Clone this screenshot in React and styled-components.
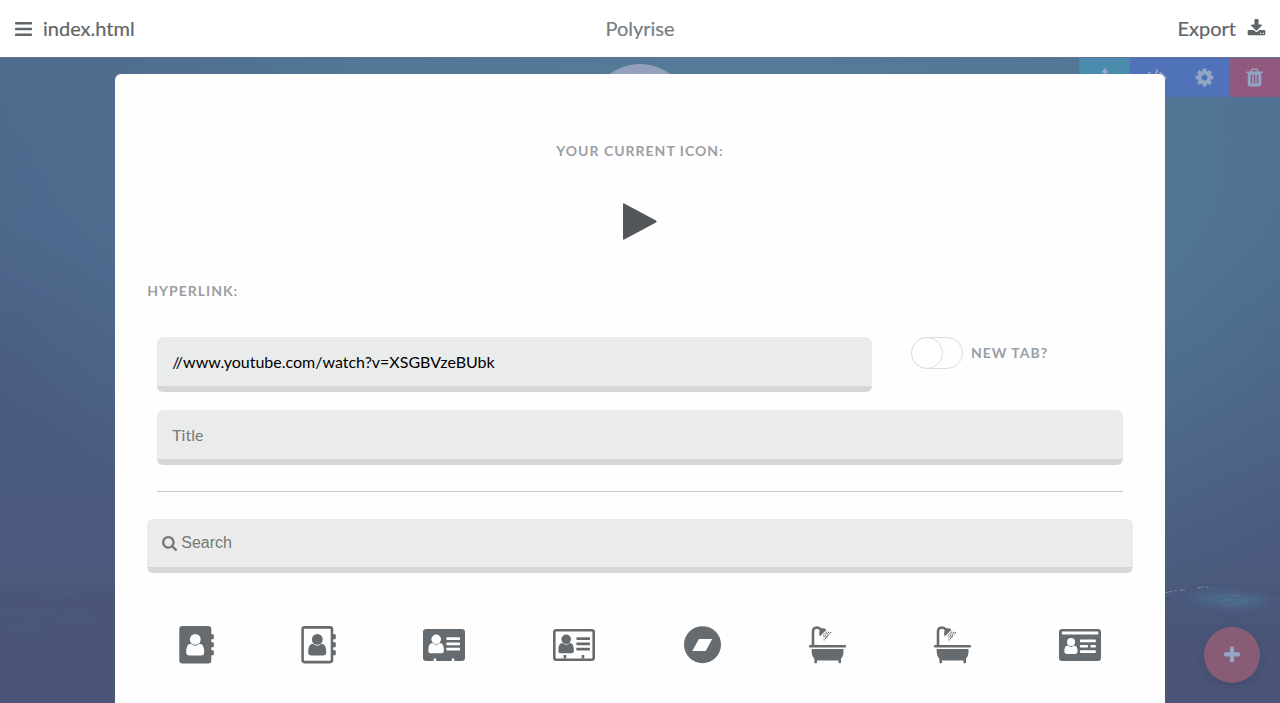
import React from "react";
import styled, { createGlobalStyle } from "styled-components";

const GlobalStyle = createGlobalStyle`
  *, *::before, *::after { box-sizing: border-box; }
  body { margin: 0; font-family: Lato, "Liberation Sans", sans-serif; color: #656b6f; }
  button { border: 0; padding: 0; margin: 0; background: none; color: inherit; font: inherit; cursor: pointer; }
  svg { display: block; overflow: visible; }
`;

const Page = styled.div`
  min-height: 100vh;
  display: flex;
  flex-direction: column;
`;

const TopBar = styled.header`
  display: grid;
  grid-template-columns: 1fr auto 1fr;
  align-items: center;
  height: 57px;
  padding: 0 14px 2px;
  background: #fff;
`;

const BarButton = styled.button`
  display: flex;
  align-items: center;
  gap: ${(p) => p.$gap}px;
  justify-self: ${(p) => p.$side};
  font-size: 20px;
  line-height: 24px;
  color: #5f6569;
  -webkit-text-stroke: 0.2px currentColor;
`;

const SiteName = styled.h1`
  margin: 0;
  font-size: 20px;
  line-height: 24px;
  font-weight: 400;
  color: #777e84;
  -webkit-text-stroke: 0.2px currentColor;
`;

const Stage = styled.main`
  position: relative;
  flex: 1;
  display: flex;
  justify-content: center;
  padding-top: 17px;
  overflow: hidden;
  background:
    radial-gradient(ellipse 66% 80% at 58% 15%, #547c99 0%, rgba(82, 120, 150, 0.95) 50%, rgba(80, 112, 146, 0.6) 75%, rgba(77, 99, 138, 0) 100%),
    linear-gradient(180deg, #4f698c 0%, #4d658a 26%, #4a5d83 42%, #4a5a7f 60%, #4a597c 81%, #4a5577 84%, #4a5577 100%);
  box-shadow: inset 0 1px 0 #64708e;
`;

const Surf = styled.svg`
  position: absolute;
  bottom: 50px;
  ${(p) => p.$side}: 0;
`;

const Avatar = styled.div`
  position: absolute;
  top: 7px;
  left: 50%;
  width: 100px;
  height: 100px;
  margin-left: -50px;
  border-radius: 50%;
  background: #93a0bb;
`;

const BlockTools = styled.div`
  position: absolute;
  top: 1px;
  right: 0;
  display: flex;
  height: 39px;
  border-radius: 0 0 4px 0;
  overflow: hidden;
`;

const ToolButton = styled.button`
  display: grid;
  place-items: center;
  width: ${(p) => p.$width || 50}px;
  background: ${(p) => p.$color};
  color: #93a5c3;
`;

const AddButton = styled.button`
  position: absolute;
  right: 20px;
  bottom: 20px;
  display: grid;
  place-items: center;
  width: 56px;
  height: 56px;
  border-radius: 50%;
  background: #885c75;
  color: #93a5c3;
  box-shadow: 0 3px 8px rgba(50, 60, 90, 0.35);
`;

const Modal = styled.section`
  position: relative;
  width: 82%;
  padding: 68px 32px 0;
  border-radius: 6px 6px 0 0;
  background: #fefefe;
`;

const Caption = styled.h2`
  margin: 0;
  font-size: 14px;
  line-height: 18px;
  font-weight: 700;
  letter-spacing: 1px;
  text-transform: uppercase;
  text-align: ${(p) => p.$align || "left"};
  color: #9b9fa4;
`;

const CurrentIcon = styled.div`
  display: flex;
  justify-content: center;
  padding: 43px 0 42px;
  color: #53565a;
`;

const LinkForm = styled.div`
  display: flex;
  flex-direction: column;
  gap: 18px;
  padding: 37px 10px 26px;
`;

const LinkRow = styled.div`
  display: grid;
  grid-template-columns: 715fr 212fr;
  gap: 39px;
`;

const TextInput = styled.input`
  width: 100%;
  height: 55px;
  padding: 0 15px;
  border: 0;
  border-bottom: 6px solid #d5d7d8;
  border-radius: 6px;
  outline: 0;
  background: #eaeceb;
  font-family: Lato, "Liberation Sans", sans-serif;
  font-size: 16px;
  color: #000;
  &::placeholder { color: #777; opacity: 1; }
`;

const ToggleLabel = styled.label`
  display: flex;
  align-items: center;
  align-self: start;
  gap: 8px;
  font-size: 14px;
  line-height: 18px;
  font-weight: 700;
  letter-spacing: 1px;
  color: #9b9fa4;
`;

const Toggle = styled.input`
  appearance: none;
  width: 52px;
  height: 32px;
  margin: 0;
  border: 1px solid #dcddde;
  border-radius: 16px;
  background: #fefefe;
  &::before {
    content: "";
    display: block;
    width: 32px;
    height: 32px;
    margin: -1px;
    border: 1px solid #dcddde;
    border-radius: 50%;
    background: #fff;
  }
  &:checked::before { margin-left: 19px; }
`;

const Divider = styled.hr`
  margin: 0 10px;
  border: 0;
  border-top: 1px solid #c9cbcc;
`;

const SearchBox = styled.label`
  display: flex;
  align-items: center;
  gap: 4px;
  height: 54px;
  margin-top: 27px;
  padding: 0 15px;
  border-bottom: 6px solid #d5d7d8;
  border-radius: 6px;
  background: #eaeceb;
  color: #777;
`;

const SearchInput = styled.input`
  flex: 1;
  min-width: 0;
  padding: 0;
  border: 0;
  outline: 0;
  background: transparent;
  font-family: "Liberation Sans", Arial, sans-serif;
  font-size: 16px;
  color: #000;
  &::placeholder { color: #777; opacity: 1; }
`;

const IconRow = styled.div`
  display: flex;
  justify-content: space-between;
  align-items: center;
  padding: 53px 32px 32px;
  color: #666b6f;
`;

const glyphs = {
  gear: "M1152 896q0-106-75-181t-181-75-181 75-75 181 75 181 181 75 181-75 75-181zm512-109v222q0 12-8 23t-20 13l-185 28q-19 54-39 91 35 50 107 138 10 12 10 25t-9 23q-27 37-99 108t-94 71q-12 0-26-9l-138-108q-44 23-91 38-16 136-29 186-7 28-36 28h-222q-14 0-24.5-8.5t-11.5-21.5l-28-184q-49-16-90-37l-141 107q-10 9-25 9-14 0-25-11-126-114-165-168-7-10-7-23 0-12 8-23 15-21 51-66.5t54-70.5q-27-50-41-99l-183-27q-13-2-21-12.5t-8-23.5v-222q0-12 8-23t19-13l186-28q14-46 39-92-40-57-107-138-10-12-10-24 0-10 9-23 26-36 98.5-107.5t94.5-71.5q13 0 26 10l138 107q44-23 91-38 16-136 29-186 7-28 36-28h222q14 0 24.5 8.5t11.5 21.5l28 184q49 16 90 37l142-107q9-9 24-9 13 0 25 10 129 119 165 170 7 8 7 22 0 12-8 23-15 21-51 66.5t-54 70.5q26 50 41 98l183 28q13 2 21 12.5t8 23.5z",
  trash: "M704 1376v-704q0-14-9-23t-23-9h-64q-14 0-23 9t-9 23v704q0 14 9 23t23 9h64q14 0 23-9t9-23zm256 0v-704q0-14-9-23t-23-9h-64q-14 0-23 9t-9 23v704q0 14 9 23t23 9h64q14 0 23-9t9-23zm256 0v-704q0-14-9-23t-23-9h-64q-14 0-23 9t-9 23v704q0 14 9 23t23 9h64q14 0 23-9t9-23zm-544-992h448l-48-117q-7-9-17-11h-317q-10 2-17 11zm928 32v64q0 14-9 23t-23 9h-96v948q0 83-47 143.5t-113 60.5h-832q-66 0-113-58.5t-47-141.5v-952h-96q-14 0-23-9t-9-23v-64q0-14 9-23t23-9h309l70-167q15-37 54-63t79-26h320q40 0 79 26t54 63l70 167h309q14 0 23 9t9 23z",
  search: "M1216 832q0-185-131.5-316.5t-316.5-131.5-316.5 131.5-131.5 316.5 131.5 316.5 316.5 131.5 316.5-131.5 131.5-316.5zm512 832q0 52-38 90t-90 38q-54 0-90-38l-343-342q-179 124-399 124-143 0-273.5-55.5t-225-150-150-225-55.5-273.5 55.5-273.5 150-225 225-150 273.5-55.5 273.5 55.5 225 150 150 225 55.5 273.5q0 220-124 399l343 343q37 37 37 90z",
  plus: "M1600 736v192q0 40-28 68t-68 28h-416v416q0 40-28 68t-68 28h-192q-40 0-68-28t-28-68v-416h-416q-40 0-68-28t-28-68v-192q0-40 28-68t68-28h416v-416q0-40 28-68t68-28h192q40 0 68 28t28 68v416h416q40 0 68 28t28 68z",
  download: "M1344 1344q0-26-19-45t-45-19-45 19-19 45 19 45 45 19 45-19 19-45zm256 0q0-26-19-45t-45-19-45 19-19 45 19 45 45 19 45-19 19-45zm128-224v320q0 40-28 68t-68 28h-1472q-40 0-68-28t-28-68v-320q0-40 28-68t68-28h465l135 136q58 56 136 56t136-56l136-136h464q40 0 68 28t28 68zm-325-569q17 41-14 70l-448 448q-18 19-45 19t-45-19l-448-448q-31-29-14-70 17-39 59-39h256v-448q0-26 19-45t45-19h256q26 0 45 19t19 45v448h256q42 0 59 39z",
};

const Glyph = ({ name, size, box = "0 0 1792 1792" }) => (
  <svg width={size} height={size} viewBox={box} fill="currentColor" aria-hidden="true">
    <path d={glyphs[name]} />
  </svg>
);

const MenuIcon = () => (
  <svg width="19" height="16" viewBox="0 0 19 16" fill="currentColor" aria-hidden="true">
    <rect x="1" y="2" width="17" height="2.600" rx="0.8" />
    <rect x="1" y="7.700" width="17" height="2.600" rx="0.8" />
    <rect x="1" y="13.400" width="17" height="2.600" rx="0.8" />
  </svg>
);

const MoveIcon = () => (
  <svg width="20" height="20" viewBox="0 0 20 20" fill="currentColor" aria-hidden="true">
    <path d="M10 0l4 4.500h-2.500v11h2.500l-4 4.500-4-4.500h2.500v-11H6z" />
  </svg>
);

const CodeIcon = () => (
  <svg width="24" height="18" viewBox="0 0 24 18" fill="none" stroke="currentColor" strokeWidth="2" aria-hidden="true">
    <path d="M7.500 3L1.500 9 7.500 15M16.500 3L22.500 9 16.500 15M14.200 0.500L9.800 17.500" />
  </svg>
);

const PlayIcon = () => (
  <svg width="34" height="37" viewBox="0 0 34 37" fill="currentColor" aria-hidden="true">
    <path d="M0 1.200Q0 0 1.200.5L33 17.600q1.300.9 0 1.800L1.200 36.500Q0 37 0 35.800z" />
  </svg>
);

const Person = ({ cx, cy, r, x, y, w, h, fill }) => (
  <g fill={fill}>
    <circle cx={cx} cy={cy} r={r} />
    <path
      d={`M${x} ${y + h * 0.72}Q${x} ${y} ${x + w * 0.27} ${y}Q${cx} ${y + h * 0.35} ${x + w * 0.73} ${y}Q${x + w} ${y} ${x + w} ${y + h * 0.72}Q${x + w} ${y + h} ${x + w * 0.82} ${y + h}H${x + w * 0.18}Q${x} ${y + h} ${x} ${y + h * 0.72}z`}
    />
  </g>
);

const AddressBook = ({ outline }) => (
  <svg width="34" height="38" viewBox="0 0 34 38" fill="currentColor" aria-hidden="true">
    {outline ? (
      <rect x="1.600" y="1.400" width="29.400" height="34.700" rx="2" fill="none" stroke="currentColor" strokeWidth="2.600" />
    ) : (
      <rect x="0.300" y="0.100" width="32" height="37.300" rx="3.200" />
    )}
    <rect x="31.500" y="8.300" width="3.300" height="5" rx="0.800" />
    <rect x="31.500" y="16.200" width="3.300" height="5" rx="0.800" />
    <rect x="31.500" y="24.200" width="3.300" height="5" rx="0.800" />
    <Person cx={16.3} cy={13.4} r={5.4} x={7.2} y={17.8} w={18} h={11.8} fill={outline ? "currentColor" : "#fefefe"} />
  </svg>
);

const ContactCard = ({ outline }) => {
  const detail = outline ? "currentColor" : "#fefefe";
  const footY = outline ? 26 : 29.4;
  return (
    <svg width="42" height="32" viewBox="0 0 42 32" fill="currentColor" aria-hidden="true">
      {outline ? (
        <rect x="1.300" y="1.300" width="39.400" height="29.400" rx="2" fill="none" stroke="currentColor" strokeWidth="2.600" />
      ) : (
        <rect width="42" height="32" rx="3.200" />
      )}
      <Person cx={13.2} cy={10.3} r={4.8} x={5.3} y={14} w={15.6} h={10.3} fill={detail} />
      <g fill={detail}>
        <rect x="23.400" y="8.200" width="13.600" height="2.700" rx="0.600" />
        <rect x="23.400" y="13.500" width="13.600" height="2.700" rx="0.600" />
        <rect x="23.400" y="18.700" width="13.600" height="2.700" rx="0.600" />
        <rect x="10.600" y={footY} width="2.600" height="3.600" rx="0.600" />
        <rect x="28.700" y={footY} width="2.600" height="3.600" rx="0.600" />
      </g>
    </svg>
  );
};

const Bandcamp = () => (
  <svg width="37" height="38" viewBox="0 0 37 38" fill="currentColor" aria-hidden="true">
    <circle cx="18.500" cy="18.700" r="18.500" />
    <path d="M8.300 25L14.900 13H28.200L21.700 25z" fill="#fefefe" />
  </svg>
);

const Bath = () => (
  <svg width="37" height="38" viewBox="0 0 37 38" fill="currentColor" aria-hidden="true">
    <rect y="18.900" width="37" height="2.600" rx="0.800" />
    <path d="M2.700 22.900H34.500V26.500Q34.300 30.500 32 32.800V36.400Q32 37.200 31.200 37.200H30.200Q29.400 37.200 29.400 36.400V34.200Q28.500 34.600 27.500 34.600H9.700Q8.800 34.600 8 34.300V36.400Q8 37.200 7.200 37.200H6.200Q5.400 37.200 5.400 36.400V32.900Q2.900 30.500 2.700 26.500z" />
    <path d="M4 19.500V5.500Q4.200 1.600 7.900 1.500Q10.500 1.500 12 3.700" fill="none" stroke="currentColor" strokeWidth="2.600" />
    <path d="M10.400 9.800Q9.400 5 12.200 2.600Q14.700 1.800 17 3.200L17.200 3.900L11.200 9.900z" />
    <path d="M18 5.700L13.500 10.200M20 6L14 12M22 6.200L16.500 11.700M18.500 10.500L14.500 14.500" fill="none" stroke="currentColor" strokeWidth="1.100" strokeDasharray="1.200 0.900" />
  </svg>
);

const DriversLicense = () => (
  <svg width="42" height="32" viewBox="0 0 42 32" fill="currentColor" aria-hidden="true">
    <rect width="42" height="32" rx="3.200" />
    <g fill="#fefefe">
      <rect x="2.800" y="2.600" width="36.500" height="2.900" rx="0.500" />
      <rect x="21" y="10.600" width="15.800" height="2.700" rx="0.600" />
      <rect x="21" y="15.900" width="7.900" height="2.700" rx="0.600" />
      <rect x="31.500" y="15.900" width="5.300" height="2.700" rx="0.600" />
      <rect x="21" y="21.200" width="15.800" height="2.700" rx="0.600" />
    </g>
    <Person cx={12} cy={13} r={4} x={5.3} y={16.5} w={13.3} h={8.5} fill="#fefefe" />
  </svg>
);

const iconChoices = [
  ["Address book", <AddressBook />],
  ["Address book outline", <AddressBook outline />],
  ["Address card", <ContactCard />],
  ["Address card outline", <ContactCard outline />],
  ["Bandcamp", <Bandcamp />],
  ["Bath", <Bath />],
  ["Bathtub", <Bath />],
  ["Driver's license", <DriversLicense />],
];

export default function App() {
  return (
    <Page>
      <GlobalStyle />
      <TopBar>
        <BarButton $side="start" $gap={10}>
          <MenuIcon />
          index.html
        </BarButton>
        <SiteName>Polyrise</SiteName>
        <BarButton $side="end" $gap={11}>
          Export
          <Glyph name="download" size={19} box="0 -100 1792 1792" />
        </BarButton>
      </TopBar>
      <Stage>
        <Surf $side="left" width="115" height="70" viewBox="0 0 115 70" fill="none" aria-hidden="true">
          <defs>
            <filter id="haze" x="-20%" y="-60%" width="140%" height="220%">
              <feGaussianBlur stdDeviation="3" />
            </filter>
          </defs>
          <g stroke="#4d7197" strokeWidth="5" opacity="0.2" filter="url(#haze)">
            <path d="M0 30q15-5 26 2t28-8M44 15q20-6 38-4M56 36q18-8 38 0M8 45q24-2 35 5" />
          </g>
        </Surf>
        <Surf $side="right" width="115" height="70" viewBox="0 0 115 70" fill="none" aria-hidden="true">
          <defs>
            <filter id="mist" x="-20%" y="-60%" width="140%" height="220%">
              <feGaussianBlur stdDeviation="4" />
            </filter>
            <linearGradient id="swell" x1="0" y1="0" x2="0" y2="1">
              <stop offset="0" stopColor="#4a597d" />
              <stop offset="0.5" stopColor="#4a5577" />
            </linearGradient>
          </defs>
          <path d="M0 11Q40 2 70 8T115 13V120H0z" fill="url(#swell)" />
          <path d="M20 14Q62 6 105 15Q92 26 66 24T20 14z" fill="#4f7fa0" opacity="0.45" filter="url(#mist)" />
          <path d="M0 10q10-3 20-3M32 5q8-2 16 0" stroke="#7fa2b8" strokeDasharray="7 2 3 3" opacity="0.7" />
          <path d="M50 14q24-4 40 2M56 18q14-3 26 0M60 22l22-2" stroke="#5d8fac" strokeDasharray="3 2 6 4" opacity="0.35" />
        </Surf>
        <Avatar />
        <BlockTools>
          <ToolButton $width={51} $color="#4a8aac" aria-label="Move"><MoveIcon /></ToolButton>
          <ToolButton $color="#4f72b8" aria-label="Edit code"><CodeIcon /></ToolButton>
          <ToolButton $width={49} $color="#4f72b8" aria-label="Settings"><Glyph name="gear" size={21} /></ToolButton>
          <ToolButton $width={51} $color="#92597f" aria-label="Delete"><Glyph name="trash" size={21} /></ToolButton>
        </BlockTools>
        <AddButton aria-label="Add block"><Glyph name="plus" size={20} /></AddButton>
        <Modal role="dialog" aria-label="Icon settings">
          <Caption $align="center">Your current icon:</Caption>
          <CurrentIcon><PlayIcon /></CurrentIcon>
          <Caption>Hyperlink:</Caption>
          <LinkForm>
            <LinkRow>
              <TextInput aria-label="Hyperlink" defaultValue="//www.youtube.com/watch?v=XSGBVzeBUbk" />
              <ToggleLabel>
                <Toggle type="checkbox" />
                NEW TAB?
              </ToggleLabel>
            </LinkRow>
            <TextInput aria-label="Title" placeholder="Title" />
          </LinkForm>
          <Divider />
          <SearchBox>
            <Glyph name="search" size={15} box="64 128 1664 1664" />
            <SearchInput aria-label="Search icons" placeholder="Search" />
          </SearchBox>
          <IconRow>
            {iconChoices.map(([name, icon]) => (
              <button key={name} type="button" aria-label={name}>{icon}</button>
            ))}
          </IconRow>
        </Modal>
      </Stage>
    </Page>
  );
}
